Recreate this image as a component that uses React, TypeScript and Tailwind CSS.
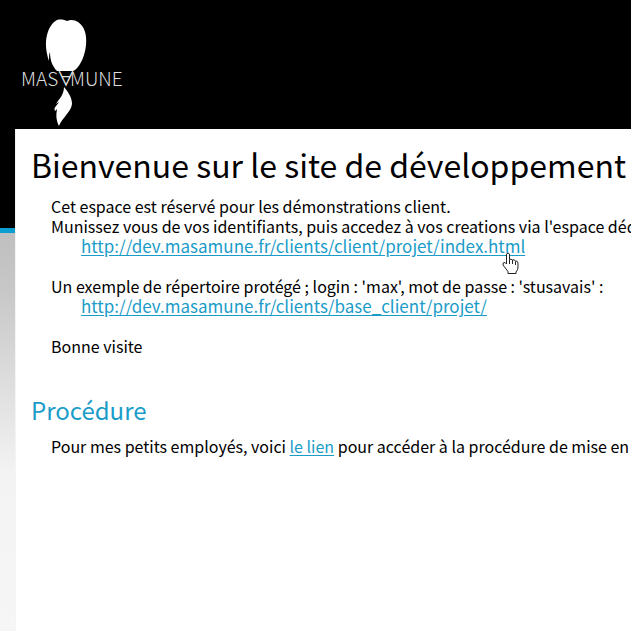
function Logo() {
  return (
    <svg
      width="104"
      height="110"
      viewBox="0 0 104 110"
      role="img"
      aria-label="Masamune"
      className="block"
    >
      <path
        fill="#fff"
        d="M35 2C39 1 43 2 45 3C49 1 53 2 56 4C63 9 65 17 64 27C63 37 59 47 53 52L51 53H35C31 49 28 43 28 34C27 36 27 39 27 43C24 34 23 25 25 17C27 9 31 4 35 2Z"
      />
      <path
        fill="#fff"
        d="M42 69C47 75 50 80 50 86C49 94 40 100 37 108C34 102 34 97 35 91L33 93C31 89 36 87 37 84L34 86C37 81 42 77 42 69Z"
      />
      <g
        fill="#dcdcdc"
        fontSize="19"
        fontWeight="300"
        style={{ fontFamily: '"Noto Sans CJK JP", "Open Sans", sans-serif' }}
      >
        <text x="-1" y="68">MAS</text>
        <text x="44" y="68" textAnchor="middle" fontWeight="400">∀</text>
        <text x="48" y="68">MUNE</text>
      </g>
    </svg>
  );
}

function HandCursor() {
  return (
    <svg width="17" height="23" viewBox="0 0 17 23" aria-hidden="true" className="absolute right-1.5 top-4">
      <path
        d="M4.500 2Q6 0 7.500 2V7.500Q9 6.500 10.500 8Q12 7 13.500 9Q15.500 8.500 16 11V15Q16 18 14 20V21.500H6V19.500L1 13Q.5 10 3 10.500L4.500 12Z"
        fill="#fff"
        stroke="#222"
        strokeLinejoin="round"
      />
      <path d="M7.500 7.500V12M10.500 8V12M13.500 9.500V13" stroke="#222" fill="none" />
    </svg>
  );
}

const link = "text-[#1a9cc9] underline underline-offset-2";

export default function App() {
  return (
    <div className="flex min-h-screen flex-col overflow-hidden bg-white font-['Noto_Sans_CJK_JP','Open_Sans',sans-serif] text-base leading-5 text-black">
      <header className="h-[129px] bg-black pl-[22px] pt-[18px]">
        <Logo />
      </header>
      <div className="flex grow">
        <div className="flex w-[15px] shrink-0 flex-col">
          <div className="h-[99px] bg-black" />
          <div className="h-[5px] bg-[#0a9fd0]" />
          <div className="grow bg-[linear-gradient(#bfbfbf,#c8c8c8_60px,#f3f3f3_240px,#f6f6f6)]" />
        </div>
        <main className="min-w-0 grow whitespace-nowrap border-l border-[#f4f4f4] pl-[15px] pt-[17px]">
          <h1 className="text-[32px] leading-9">Bienvenue sur le site de développement</h1>
          <div className="mt-[14px] pl-5">
            <p>Cet espace est réservé pour les démonstrations client.</p>
            <p>Munissez vous de vos identifiants, puis accedez à vos creations via l'espace dédié :</p>
            <p className="flex pl-[30px]">
              <span className="relative">
                <a href="#projet" className={`${link} text-[17px]`}>http://dev.masamune.fr/clients/client/projet/index.html</a>
                <HandCursor />
              </span>
            </p>
            <p className="mt-5">Un exemple de répertoire protégé ; login : 'max', mot de passe : 'stusavais' :</p>
            <p className="flex pl-[30px]">
              <a href="#base" className={`${link} text-[17px]`}>http://dev.masamune.fr/clients/base_client/projet/</a>
            </p>
            <p className="mt-5">Bonne visite</p>
          </div>
          <h2 className="mt-[38px] text-2xl leading-8 text-[#1a9cc9]">Procédure</h2>
          <p className="mt-[10px] pl-5">
            Pour mes petits employés, voici <a href="#procedure" className={link}>le lien</a> pour accéder à la procédure de mise en place
          </p>
        </main>
      </div>
    </div>
  );
}
